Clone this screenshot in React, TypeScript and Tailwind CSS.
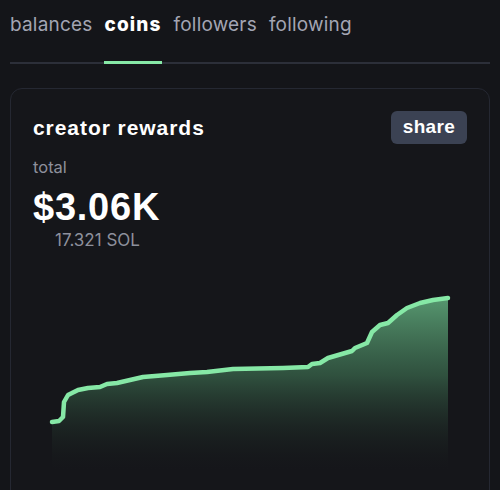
import React from "react";

const pts: [number, number][] = [
  [52, 422], [59, 421], [63, 417], [64, 402], [68, 395], [78, 390], [88, 388],
  [100, 387], [107, 384], [117, 383], [130, 380], [143, 377], [167, 375],
  [190, 373], [207, 372], [233, 369], [283, 368], [308, 367], [312, 364],
  [320, 363], [328, 358], [352, 351], [355, 348], [367, 343], [372, 332],
  [380, 325], [388, 323], [397, 315], [407, 308], [420, 303], [433, 300],
  [448, 298],
];

// chart svg origin sits at page (33, 280)
const OX = 33;
const OY = 280;

const RewardsChart: React.FC = () => {
  const line = pts.map(([x, y], i) => `${i ? "L" : "M"}${x - OX} ${y - OY}`).join(" ");
  const last = pts[pts.length - 1];
  const area = `${line} L${last[0] - OX} 190 L${pts[0][0] - OX} 190 Z`;
  return (
    <svg width="434" height="210" viewBox="0 0 434 210" className="block">
      <defs>
        <linearGradient id="fill" x1="0" y1="0" x2="0" y2="1">
          <stop offset="0%" stopColor="#5a9e74" stopOpacity="0.95" />
          <stop offset="45%" stopColor="#3b6a4e" stopOpacity="0.7" />
          <stop offset="100%" stopColor="#1c2320" stopOpacity="0" />
        </linearGradient>
      </defs>
      <path d={area} fill="url(#fill)" />
      <path d={line} fill="none" stroke="#86e8a6" strokeWidth="4.5" strokeLinejoin="round" strokeLinecap="round" />
    </svg>
  );
};

const heavy = { fontFamily: "'Liberation Sans', Arial, sans-serif" };

export default function App() {
  const tabs = ["balances", "coins", "followers", "following"];
  return (
    <div
      className="h-[490px] overflow-hidden bg-[#141519] px-[10px]"
      style={{ fontFamily: "Inter, 'Noto Sans', sans-serif" }}
    >
      <div className="flex gap-[12px] border-b-2 border-[#2c2f39] pt-[11px]">
        {tabs.map((t) => (
          <div
            key={t}
            className={
              t === "coins"
                ? "relative pb-[23px] text-[19px] leading-[28px] font-extrabold tracking-[0.06em] text-white"
                : "relative pb-[23px] text-[19px] leading-[28px] tracking-[0.01em] text-[#a3a5b3]"
            }
          >
            {t}
            {t === "coins" && (
              <div className="absolute left-0 right-0 bottom-[-2px] h-[3px] bg-[#86e8a6]" />
            )}
          </div>
        ))}
      </div>

      <div className="mt-[24px] rounded-[12px] border border-[#252832] bg-[#15161a] px-[22px] pt-[22px] h-[420px]">
        <div className="flex items-center justify-between">
          <div className="text-[21px] font-bold tracking-[0.045em] text-white" style={heavy}>
            creator rewards
          </div>
          <button
            className="h-[33px] w-[76px] rounded-[6px] bg-[#3b4253] text-[19px] font-bold tracking-[0.02em] text-white"
            style={heavy}
          >
            share
          </button>
        </div>
        <div className="mt-[13px] text-[16.5px] leading-[20px] text-[#8d909c]">total</div>
        <div className="mt-[8px] text-[38px] leading-[44px] font-bold tracking-[0.02em] text-white" style={heavy}>
          $3.06K
        </div>
        <div className="ml-[22px] mt-[1px] text-[17px] leading-[20px] text-[#8d909c]">17.321 SOL</div>
        <div className="mt-[30px]">
          <RewardsChart />
        </div>
      </div>
    </div>
  );
}
